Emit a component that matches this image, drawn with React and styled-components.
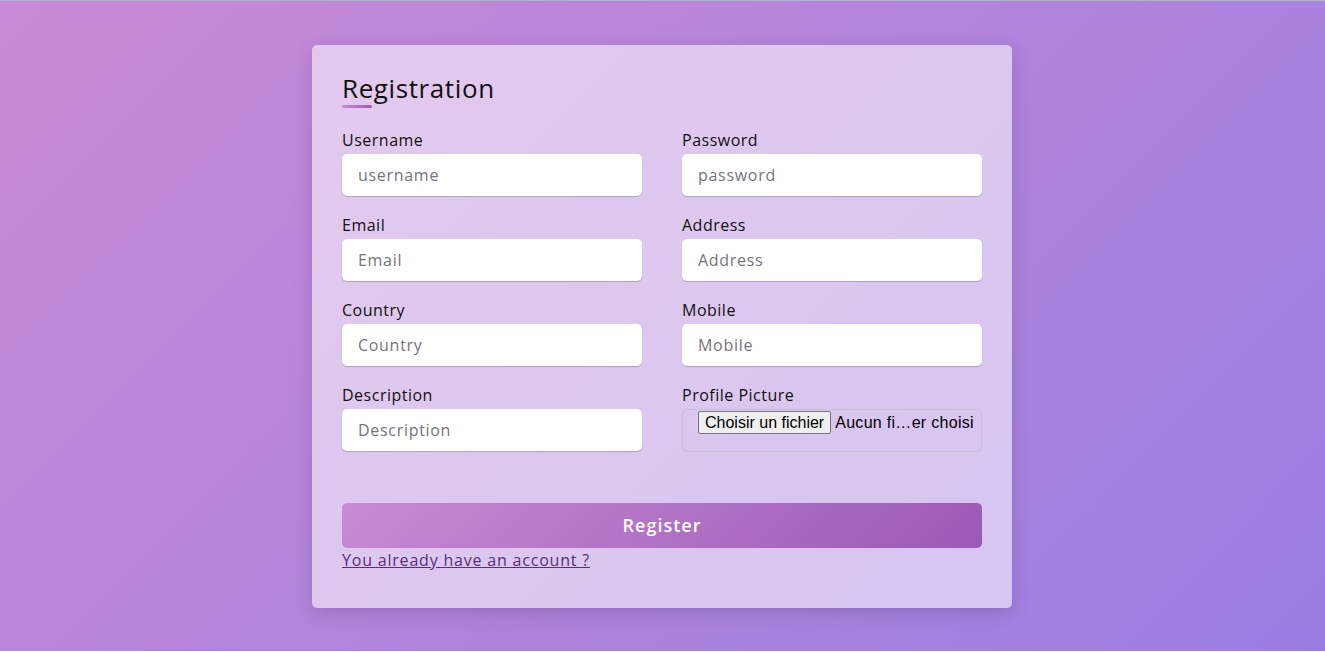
import styled, { createGlobalStyle } from 'styled-components';

const GlobalStyle = createGlobalStyle`
  * {
    box-sizing: border-box;
  }
  body {
    margin: 0;
    background: #ffffff;
    font-family: 'Open Sans', 'Noto Sans', sans-serif;
    letter-spacing: 0.5px;
  }
`;

const fields = [
  { label: 'Username', placeholder: 'username' },
  { label: 'Password', placeholder: 'password' },
  { label: 'Email', placeholder: 'Email' },
  { label: 'Address', placeholder: 'Address' },
  { label: 'Country', placeholder: 'Country' },
  { label: 'Mobile', placeholder: 'Mobile' },
  { label: 'Description', placeholder: 'Description' },
];

export default function App() {
  return (
    <>
      <GlobalStyle />
      <Page>
        <Card>
          <Title>Registration</Title>
          <Form onSubmit={(e) => e.preventDefault()}>
            <Grid>
              {fields.map((f) => (
                <Field key={f.label}>
                  <Label>{f.label}</Label>
                  <Input type="text" placeholder={f.placeholder} />
                </Field>
              ))}
              <Field>
                <Label>Profile Picture</Label>
                <FileBox>
                  <FileBtn>Choisir un fichier</FileBtn>
                  <FileName>Aucun fi…er choisi</FileName>
                </FileBox>
              </Field>
            </Grid>
            <SubmitBtn type="submit">Register</SubmitBtn>
            <Link href="#">You already have an account ?</Link>
          </Form>
        </Card>
      </Page>
    </>
  );
}

const Page = styled.div`
  display: flex;
  align-items: center;
  justify-content: center;
  min-height: 651px;
  padding-right: 1px;
  border-top: 1px solid #aeb4cc;
  background: linear-gradient(135deg, #c98ad5, #9b7ee3);
`;

const Card = styled.div`
  width: 700px;
  padding: 30px 30px 36px;
  border-radius: 5px;
  background: rgba(255, 255, 255, 0.55);
  box-shadow: 0 5px 20px rgba(0, 0, 0, 0.15);
`;

const Title = styled.h1`
  position: relative;
  margin: 0;
  padding-bottom: 6px;
  font-size: 26px;
  font-weight: 500;
  line-height: 27px;
  letter-spacing: 0.6px;
  color: #111;
  &::before {
    content: '';
    position: absolute;
    left: 0;
    bottom: 0;
    width: 30px;
    height: 3px;
    border-radius: 2px;
    background: linear-gradient(135deg, #c88bd4, #9b59b6);
  }
`;

const Form = styled.form`
  margin-top: 20px;
`;

const Grid = styled.div`
  display: grid;
  grid-template-columns: 300px 300px;
  justify-content: space-between;
`;

const Field = styled.div`
  margin-bottom: 17px;
`;

const Label = styled.span`
  display: block;
  margin-bottom: 2px;
  font-size: 16px;
  line-height: 24px;
  color: #111;
`;

const Input = styled.input`
  display: block;
  width: 100%;
  height: 42px;
  padding: 0 16px;
  border: none;
  border-radius: 5px;
  background: #fff;
  box-shadow: 0 1px 1px rgba(0, 0, 0, 0.2);
  font-family: inherit;
  font-size: 16px;
  letter-spacing: 0.7px;
  color: #333;
  outline: none;
  &::placeholder {
    color: #77737c;
  }
`;

const FileBox = styled.div`
  display: flex;
  align-items: flex-start;
  gap: 4px;
  height: 43px;
  padding: 1px 15px;
  border: 1px solid #c8bfd2;
  border-radius: 5px;
  font-family: 'Liberation Sans', Arial, sans-serif;
  font-size: 16px;
  letter-spacing: 0.3px;
  white-space: nowrap;
  overflow: hidden;
`;

const FileBtn = styled.span`
  padding: 1px 6px;
  border: 1px solid #767676;
  border-radius: 2px;
  background: #efefef;
  color: #000;
  line-height: 19px;
  letter-spacing: 0;
`;

const FileName = styled.span`
  line-height: 23px;
  color: #000;
`;

const SubmitBtn = styled.button`
  display: block;
  width: 100%;
  height: 45px;
  margin-top: 34px;
  border: none;
  border-radius: 5px;
  background: linear-gradient(135deg, #c88bd4, #9b59b6);
  color: #fff;
  font-family: inherit;
  font-size: 18px;
  font-weight: 600;
  letter-spacing: 1px;
  cursor: pointer;
`;

const Link = styled.a`
  display: inline-block;
  font-size: 16px;
  line-height: 24px;
  letter-spacing: 0.8px;
  color: #5a2d82;
  text-decoration: underline;
`;
